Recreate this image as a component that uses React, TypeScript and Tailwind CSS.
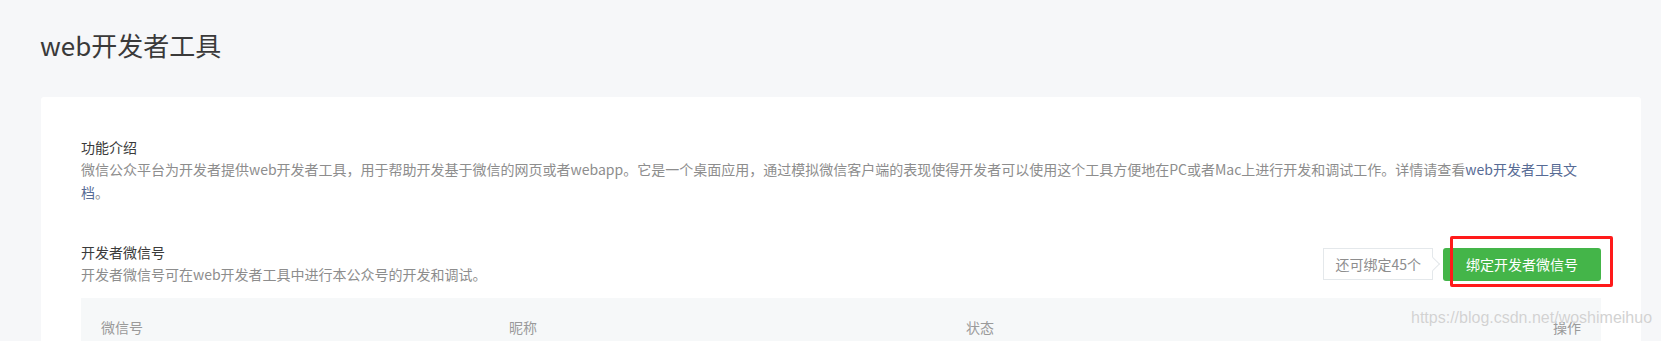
import React from "react";

const columns = [
  { label: "微信号", className: "w-[408px] pl-[20px]" },
  { label: "昵称", className: "w-[457px] pl-[20px]" },
  { label: "状态", className: "flex-1 pl-[20px]" },
  { label: "操作", className: "w-[200px] pr-[20px] text-right" },
];

export default function App() {
  return (
    <div
      className="relative min-h-screen overflow-hidden bg-[#f6f7f9] text-[#353535]"
      style={{ fontFamily: '"Noto Sans CJK SC", "Noto Sans", sans-serif' }}
    >
      <h1 className="pl-[40px] pt-[27px] text-[26px] font-normal leading-[36px] text-[#3a3a3a]">
        web开发者工具
      </h1>

      <div className="ml-[41px] mt-[34px] w-[1600px] rounded-[3px] bg-white px-[40px] pb-[40px] pt-[40px]">
        <section>
          <h3 className="text-[14px] font-normal leading-[21px] text-[#3a3a3a]">功能介绍</h3>
          <p className="text-[14px] leading-[23px] text-[#8d8d8d]">
            微信公众平台为开发者提供web开发者工具，用于帮助开发基于微信的网页或者webapp。它是一个桌面应用，通过模拟微信客户端的表现使得开发者可以使用这个工具方便地在PC或者Mac上进行开发和调试工作。详情请查看
            <a className="text-[#576b95]" href="#">
              web开发者工具文档
            </a>
            。
          </p>
        </section>

        <section className="mt-[38px]">
          <div className="flex items-center justify-between">
            <div>
              <h3 className="text-[14px] font-normal leading-[21px] text-[#3a3a3a]">开发者微信号</h3>
              <p className="text-[14px] leading-[23px] text-[#8d8d8d]">
                开发者微信号可在web开发者工具中进行本公众号的开发和调试。
              </p>
            </div>

            <div className="flex items-center">
              <div className="relative flex h-[32px] items-center border border-[#e4e8eb] bg-white px-[11px] text-[14px] text-[#8d8d8d]">
                还可绑定45个
                <span className="absolute right-[-6px] top-1/2 h-[10px] w-[10px] -translate-y-1/2 rotate-45 border-r border-t border-[#e4e8eb] bg-white" />
              </div>
              <div className="relative ml-[10px]">
                <button
                  type="button"
                  className="flex h-[33px] w-[158px] items-center justify-center rounded-[3px] bg-[#44b549] text-[14px] text-white"
                >
                  绑定开发者微信号
                </button>
                <span className="pointer-events-none absolute bottom-[-6px] left-[7px] right-[-12px] top-[-12px] rounded-[2px] border-[3px] border-[#ff1a1a]" />
              </div>
            </div>
          </div>

          <div className="mt-[12px] flex h-[58px] items-center bg-[#f6f8f9] text-[14px] text-[#9a9a9a]">
            {columns.map((column) => (
              <div key={column.label} className={column.className}>
                {column.label}
              </div>
            ))}
          </div>
        </section>
      </div>

      <div
        className="pointer-events-none absolute left-[1411px] top-[309px] text-[16px] leading-[18px] text-[#d2d2d2]"
        style={{ fontFamily: '"Liberation Sans", Arial, sans-serif', textShadow: "0 0 1px #fff" }}
      >
        https://blog.csdn.net/woshimeihuo
      </div>
    </div>
  );
}
